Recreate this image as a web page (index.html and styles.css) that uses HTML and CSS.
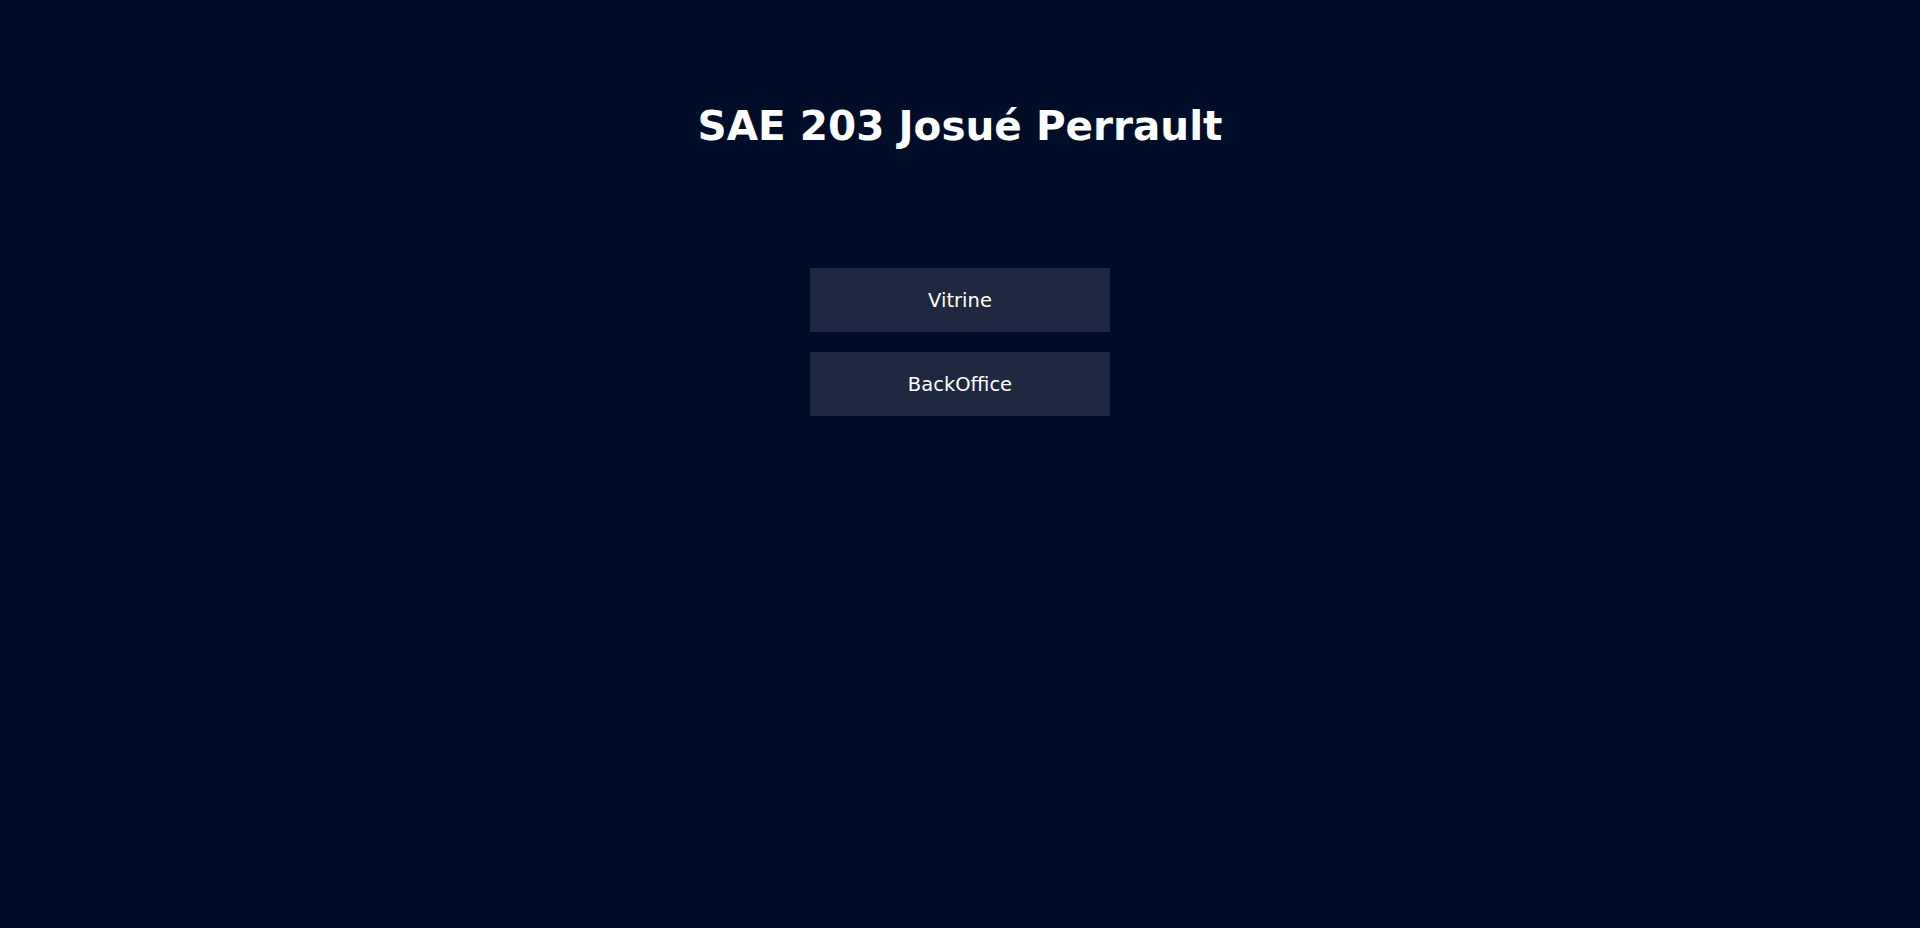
FILE: index.html
```html
<!DOCTYPE html>
<html lang="fr">
<head>
<meta charset="utf-8">
<title>SAE 203 Josué Perrault</title>
<link rel="stylesheet" href="styles.css">
</head>
<body>
<main class="page">
  <h1 class="title">SAE 203 Josué Perrault</h1>
  <nav class="menu">
    <a class="btn" href="#">Vitrine</a>
    <a class="btn" href="#">BackOffice</a>
  </nav>
</main>
</body>
</html>
```
FILE: styles.css
```css
html, body {
  margin: 0;
  padding: 0;
  height: 100%;
}
body {
  background: #000d28;
  color: #ffffff;
  font-family: "DejaVu Sans", Verdana, sans-serif;
}
.page {
  display: flex;
  flex-direction: column;
  align-items: center;
  padding-top: 98px;
}
.title {
  margin: 0;
  font-size: 40.5px;
  font-weight: bold;
  line-height: 56px;
}
.menu {
  display: flex;
  flex-direction: column;
  gap: 20px;
  margin-top: 114px;
}
.btn {
  display: flex;
  align-items: center;
  justify-content: center;
  width: 300px;
  height: 64px;
  background: #1e2840;
  color: #ffffff;
  text-decoration: none;
  font-size: 19.5px;
}
```
